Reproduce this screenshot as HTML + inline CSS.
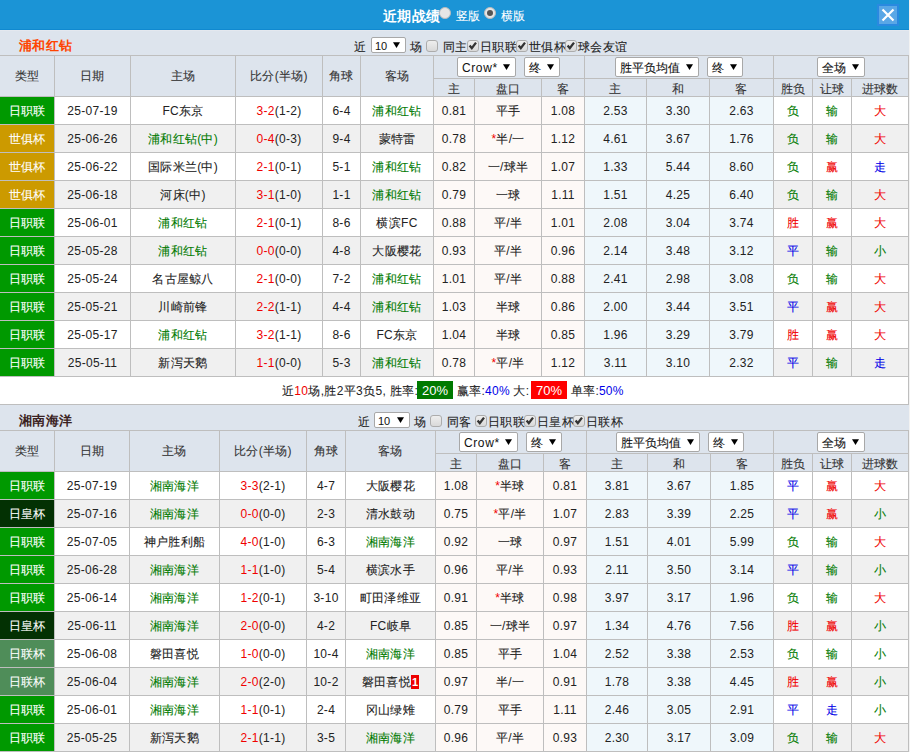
<!DOCTYPE html><html><head><meta charset="utf-8"><style>
*{margin:0;padding:0;box-sizing:border-box}
html,body{width:910px;height:752px;overflow:hidden;background:#fff}
body{position:relative;font-family:"Liberation Sans",sans-serif;font-size:12px;color:#222}
.c{font-style:normal;-webkit-text-stroke-width:0.1px}
.t[style*=bold] .c{-webkit-text-stroke-width:0}
body>div,body>svg{position:absolute}
.t{text-align:center;white-space:nowrap;overflow:visible;letter-spacing:0.3px}
.g{color:#007a00}.r{color:#f00000}.b{color:#0000e8}
.sel{position:absolute;background:#fff;border:1px solid #a8a8a8;border-radius:2px;white-space:nowrap;font-size:12px;color:#111;padding-left:5px}
.cb{position:absolute;width:12px;height:12px;border:1px solid #acacac;border-radius:3px;background:linear-gradient(#eeeeee,#d9d9d9)}
.cb svg{position:absolute;left:-1px;top:-1px}
.rad{position:absolute;width:12px;height:12px;border-radius:50%;background:#e6e6e6;border:1px solid #bbb}
.rad.on::after{content:"";position:absolute;left:2px;top:2px;width:6px;height:6px;border-radius:50%;background:#555}
.box{position:absolute;color:#fff;text-align:center;line-height:19px;font-size:13px}
.bg{background:#007a00}.br{background:#ff0000}
.rc{background:#ee0000;color:#fff;font-weight:bold;font-size:11px;padding:0 1px;line-height:14px;display:inline-block}
</style></head><body>
<div style="left:0px;top:0px;width:909px;height:30px;background:#1b94d6"></div>
<div style="left:0px;top:29px;width:909px;height:1px;background:#1089d0"></div>
<div style="left:0px;top:30px;width:909px;height:1px;background:#e4e8ef"></div>
<div class="t" style="left:383px;top:1px;width:60px;height:30px;line-height:30px;color:#fff;font-weight:bold;font-size:14px;text-align:left"><i class="c">近期战绩</i></div>
<div class="rad" style="left:439px;top:7px"></div>
<div class="t" style="left:456px;top:1px;width:30px;height:30px;line-height:30px;color:#fff;text-align:left"><i class="c">竖版</i></div>
<div class="rad on" style="left:484px;top:7px"></div>
<div class="t" style="left:501px;top:1px;width:30px;height:30px;line-height:30px;color:#fff;text-align:left"><i class="c">横版</i></div>
<div style="left:877px;top:4px;width:22px;height:22px;background:#2a89e0"></div>
<div style="left:879px;top:6px;width:18px;height:18px;background:#5aa7e6"></div>
<svg style="position:absolute;left:879px;top:6px" width="18" height="18" viewBox="0 0 18 18"><path d="M3.5 3.5 L14.5 14.5 M14.5 3.5 L3.5 14.5" stroke="#fff" stroke-width="2.2" fill="none"/></svg>
<div style="left:0px;top:30px;width:909px;height:25px;background:#dde4ed"></div>
<div class="t" style="left:19px;top:34px;width:200px;height:24px;line-height:24px;text-align:left;font-weight:bold;font-size:13px;-webkit-text-stroke-width:0;color:#ff4400"><i class="c">浦和红钻</i></div>
<div style="left:0px;top:55px;width:909px;height:41px;background:#dde4ed"></div>
<div style="left:0px;top:96px;width:909px;height:28px;background:#fff"></div>
<div style="left:434px;top:97px;width:150px;height:27px;background:#fdf9f7"></div>
<div style="left:585px;top:97px;width:188px;height:27px;background:#eff7fb"></div>
<div style="left:0px;top:97px;width:54px;height:27px;background:#009900"></div>
<div style="left:0px;top:124px;width:909px;height:28px;background:#f0f0f0"></div>
<div style="left:434px;top:125px;width:150px;height:27px;background:#fdf9f7"></div>
<div style="left:585px;top:125px;width:188px;height:27px;background:#eff7fb"></div>
<div style="left:0px;top:125px;width:54px;height:27px;background:#cc9a00"></div>
<div style="left:0px;top:152px;width:909px;height:28px;background:#fff"></div>
<div style="left:434px;top:153px;width:150px;height:27px;background:#fdf9f7"></div>
<div style="left:585px;top:153px;width:188px;height:27px;background:#eff7fb"></div>
<div style="left:0px;top:153px;width:54px;height:27px;background:#cc9a00"></div>
<div style="left:0px;top:180px;width:909px;height:28px;background:#f0f0f0"></div>
<div style="left:434px;top:181px;width:150px;height:27px;background:#fdf9f7"></div>
<div style="left:585px;top:181px;width:188px;height:27px;background:#eff7fb"></div>
<div style="left:0px;top:181px;width:54px;height:27px;background:#cc9a00"></div>
<div style="left:0px;top:208px;width:909px;height:28px;background:#fff"></div>
<div style="left:434px;top:209px;width:150px;height:27px;background:#fdf9f7"></div>
<div style="left:585px;top:209px;width:188px;height:27px;background:#eff7fb"></div>
<div style="left:0px;top:209px;width:54px;height:27px;background:#009900"></div>
<div style="left:0px;top:236px;width:909px;height:28px;background:#f0f0f0"></div>
<div style="left:434px;top:237px;width:150px;height:27px;background:#fdf9f7"></div>
<div style="left:585px;top:237px;width:188px;height:27px;background:#eff7fb"></div>
<div style="left:0px;top:237px;width:54px;height:27px;background:#009900"></div>
<div style="left:0px;top:264px;width:909px;height:28px;background:#fff"></div>
<div style="left:434px;top:265px;width:150px;height:27px;background:#fdf9f7"></div>
<div style="left:585px;top:265px;width:188px;height:27px;background:#eff7fb"></div>
<div style="left:0px;top:265px;width:54px;height:27px;background:#009900"></div>
<div style="left:0px;top:292px;width:909px;height:28px;background:#f0f0f0"></div>
<div style="left:434px;top:293px;width:150px;height:27px;background:#fdf9f7"></div>
<div style="left:585px;top:293px;width:188px;height:27px;background:#eff7fb"></div>
<div style="left:0px;top:293px;width:54px;height:27px;background:#009900"></div>
<div style="left:0px;top:320px;width:909px;height:28px;background:#fff"></div>
<div style="left:434px;top:321px;width:150px;height:27px;background:#fdf9f7"></div>
<div style="left:585px;top:321px;width:188px;height:27px;background:#eff7fb"></div>
<div style="left:0px;top:321px;width:54px;height:27px;background:#009900"></div>
<div style="left:0px;top:348px;width:909px;height:28px;background:#f0f0f0"></div>
<div style="left:434px;top:349px;width:150px;height:27px;background:#fdf9f7"></div>
<div style="left:585px;top:349px;width:188px;height:27px;background:#eff7fb"></div>
<div style="left:0px;top:349px;width:54px;height:27px;background:#009900"></div>
<div style="left:0px;top:55px;width:909px;height:1px;background:#bebebe"></div>
<div style="left:433px;top:78px;width:476px;height:1px;background:#bebebe"></div>
<div style="left:0px;top:96px;width:909px;height:1px;background:#bebebe"></div>
<div style="left:0px;top:124px;width:909px;height:1px;background:#bebebe"></div>
<div style="left:0px;top:152px;width:909px;height:1px;background:#bebebe"></div>
<div style="left:0px;top:180px;width:909px;height:1px;background:#bebebe"></div>
<div style="left:0px;top:208px;width:909px;height:1px;background:#bebebe"></div>
<div style="left:0px;top:236px;width:909px;height:1px;background:#bebebe"></div>
<div style="left:0px;top:264px;width:909px;height:1px;background:#bebebe"></div>
<div style="left:0px;top:292px;width:909px;height:1px;background:#bebebe"></div>
<div style="left:0px;top:320px;width:909px;height:1px;background:#bebebe"></div>
<div style="left:0px;top:348px;width:909px;height:1px;background:#bebebe"></div>
<div style="left:0px;top:376px;width:909px;height:1px;background:#bebebe"></div>
<div style="left:54px;top:55px;width:1px;height:322px;background:#bebebe"></div>
<div style="left:130px;top:55px;width:1px;height:322px;background:#bebebe"></div>
<div style="left:235px;top:55px;width:1px;height:322px;background:#bebebe"></div>
<div style="left:322px;top:55px;width:1px;height:322px;background:#bebebe"></div>
<div style="left:360px;top:55px;width:1px;height:322px;background:#bebebe"></div>
<div style="left:433px;top:55px;width:1px;height:322px;background:#bebebe"></div>
<div style="left:474px;top:78px;width:1px;height:299px;background:#bebebe"></div>
<div style="left:541px;top:78px;width:1px;height:299px;background:#bebebe"></div>
<div style="left:584px;top:55px;width:1px;height:322px;background:#bebebe"></div>
<div style="left:646px;top:78px;width:1px;height:299px;background:#bebebe"></div>
<div style="left:709px;top:78px;width:1px;height:299px;background:#bebebe"></div>
<div style="left:773px;top:55px;width:1px;height:322px;background:#bebebe"></div>
<div style="left:812px;top:78px;width:1px;height:299px;background:#bebebe"></div>
<div style="left:851px;top:78px;width:1px;height:299px;background:#bebebe"></div>
<div style="left:908px;top:55px;width:1px;height:322px;background:#bebebe"></div>
<div class="t" style="left:0px;top:56px;width:54px;height:40px;line-height:40px;color:#333"><i class="c">类型</i></div>
<div class="t" style="left:55px;top:56px;width:75px;height:40px;line-height:40px;color:#333"><i class="c">日期</i></div>
<div class="t" style="left:131px;top:56px;width:104px;height:40px;line-height:40px;color:#333"><i class="c">主场</i></div>
<div class="t" style="left:236px;top:56px;width:86px;height:40px;line-height:40px;color:#333"><i class="c">比分</i>(<i class="c">半场</i>)</div>
<div class="t" style="left:323px;top:56px;width:37px;height:40px;line-height:40px;color:#333"><i class="c">角球</i></div>
<div class="t" style="left:361px;top:56px;width:72px;height:40px;line-height:40px;color:#333"><i class="c">客场</i></div>
<div class="t" style="left:434px;top:81px;width:40px;height:17px;line-height:17px;color:#333"><i class="c">主</i></div>
<div class="t" style="left:475px;top:81px;width:66px;height:17px;line-height:17px;color:#333"><i class="c">盘口</i></div>
<div class="t" style="left:542px;top:81px;width:42px;height:17px;line-height:17px;color:#333"><i class="c">客</i></div>
<div class="t" style="left:585px;top:81px;width:61px;height:17px;line-height:17px;color:#333"><i class="c">主</i></div>
<div class="t" style="left:647px;top:81px;width:62px;height:17px;line-height:17px;color:#333"><i class="c">和</i></div>
<div class="t" style="left:710px;top:81px;width:63px;height:17px;line-height:17px;color:#333"><i class="c">客</i></div>
<div class="t" style="left:774px;top:81px;width:38px;height:17px;line-height:17px;color:#333"><i class="c">胜负</i></div>
<div class="t" style="left:813px;top:81px;width:38px;height:17px;line-height:17px;color:#333"><i class="c">让球</i></div>
<div class="t" style="left:852px;top:81px;width:56px;height:17px;line-height:17px;color:#333"><i class="c">进球数</i></div>
<div class="t" style="left:0px;top:98px;width:54px;height:27px;line-height:27px;color:#fff"><i class="c">日职联</i></div>
<div class="t" style="left:55px;top:98px;width:75px;height:27px;line-height:27px;">25-07-19</div>
<div class="t" style="left:131px;top:98px;width:104px;height:27px;line-height:27px;">FC<i class="c">东京</i></div>
<div class="t" style="left:236px;top:98px;width:86px;height:27px;line-height:27px;"><span class="r">3-2</span>(1-2)</div>
<div class="t" style="left:323px;top:98px;width:37px;height:27px;line-height:27px;">6-4</div>
<div class="t" style="left:361px;top:98px;width:72px;height:27px;line-height:27px;"><span class="g"><i class="c">浦和红钻</i></span></div>
<div class="t" style="left:434px;top:98px;width:40px;height:27px;line-height:27px;">0.81</div>
<div class="t" style="left:475px;top:98px;width:66px;height:27px;line-height:27px;"><i class="c">平手</i></div>
<div class="t" style="left:542px;top:98px;width:42px;height:27px;line-height:27px;">1.08</div>
<div class="t" style="left:585px;top:98px;width:61px;height:27px;line-height:27px;">2.53</div>
<div class="t" style="left:647px;top:98px;width:62px;height:27px;line-height:27px;">3.30</div>
<div class="t" style="left:710px;top:98px;width:63px;height:27px;line-height:27px;">2.63</div>
<div class="t" style="left:774px;top:98px;width:38px;height:27px;line-height:27px;"><span class="g"><i class="c">负</i></span></div>
<div class="t" style="left:813px;top:98px;width:38px;height:27px;line-height:27px;"><span class="g"><i class="c">输</i></span></div>
<div class="t" style="left:852px;top:98px;width:56px;height:27px;line-height:27px;"><span class="r"><i class="c">大</i></span></div>
<div class="t" style="left:0px;top:126px;width:54px;height:27px;line-height:27px;color:#fff"><i class="c">世俱杯</i></div>
<div class="t" style="left:55px;top:126px;width:75px;height:27px;line-height:27px;">25-06-26</div>
<div class="t" style="left:131px;top:126px;width:104px;height:27px;line-height:27px;"><span class="g"><i class="c">浦和红钻</i>(<i class="c">中</i>)</span></div>
<div class="t" style="left:236px;top:126px;width:86px;height:27px;line-height:27px;"><span class="r">0-4</span>(0-3)</div>
<div class="t" style="left:323px;top:126px;width:37px;height:27px;line-height:27px;">9-4</div>
<div class="t" style="left:361px;top:126px;width:72px;height:27px;line-height:27px;"><i class="c">蒙特雷</i></div>
<div class="t" style="left:434px;top:126px;width:40px;height:27px;line-height:27px;">0.78</div>
<div class="t" style="left:475px;top:126px;width:66px;height:27px;line-height:27px;"><span class="r">*</span><i class="c">半</i>/<i class="c">一</i></div>
<div class="t" style="left:542px;top:126px;width:42px;height:27px;line-height:27px;">1.12</div>
<div class="t" style="left:585px;top:126px;width:61px;height:27px;line-height:27px;">4.61</div>
<div class="t" style="left:647px;top:126px;width:62px;height:27px;line-height:27px;">3.67</div>
<div class="t" style="left:710px;top:126px;width:63px;height:27px;line-height:27px;">1.76</div>
<div class="t" style="left:774px;top:126px;width:38px;height:27px;line-height:27px;"><span class="g"><i class="c">负</i></span></div>
<div class="t" style="left:813px;top:126px;width:38px;height:27px;line-height:27px;"><span class="g"><i class="c">输</i></span></div>
<div class="t" style="left:852px;top:126px;width:56px;height:27px;line-height:27px;"><span class="r"><i class="c">大</i></span></div>
<div class="t" style="left:0px;top:154px;width:54px;height:27px;line-height:27px;color:#fff"><i class="c">世俱杯</i></div>
<div class="t" style="left:55px;top:154px;width:75px;height:27px;line-height:27px;">25-06-22</div>
<div class="t" style="left:131px;top:154px;width:104px;height:27px;line-height:27px;"><i class="c">国际米兰</i>(<i class="c">中</i>)</div>
<div class="t" style="left:236px;top:154px;width:86px;height:27px;line-height:27px;"><span class="r">2-1</span>(0-1)</div>
<div class="t" style="left:323px;top:154px;width:37px;height:27px;line-height:27px;">5-1</div>
<div class="t" style="left:361px;top:154px;width:72px;height:27px;line-height:27px;"><span class="g"><i class="c">浦和红钻</i></span></div>
<div class="t" style="left:434px;top:154px;width:40px;height:27px;line-height:27px;">0.82</div>
<div class="t" style="left:475px;top:154px;width:66px;height:27px;line-height:27px;"><i class="c">一</i>/<i class="c">球半</i></div>
<div class="t" style="left:542px;top:154px;width:42px;height:27px;line-height:27px;">1.07</div>
<div class="t" style="left:585px;top:154px;width:61px;height:27px;line-height:27px;">1.33</div>
<div class="t" style="left:647px;top:154px;width:62px;height:27px;line-height:27px;">5.44</div>
<div class="t" style="left:710px;top:154px;width:63px;height:27px;line-height:27px;">8.60</div>
<div class="t" style="left:774px;top:154px;width:38px;height:27px;line-height:27px;"><span class="g"><i class="c">负</i></span></div>
<div class="t" style="left:813px;top:154px;width:38px;height:27px;line-height:27px;"><span class="r"><i class="c">赢</i></span></div>
<div class="t" style="left:852px;top:154px;width:56px;height:27px;line-height:27px;"><span class="b"><i class="c">走</i></span></div>
<div class="t" style="left:0px;top:182px;width:54px;height:27px;line-height:27px;color:#fff"><i class="c">世俱杯</i></div>
<div class="t" style="left:55px;top:182px;width:75px;height:27px;line-height:27px;">25-06-18</div>
<div class="t" style="left:131px;top:182px;width:104px;height:27px;line-height:27px;"><i class="c">河床</i>(<i class="c">中</i>)</div>
<div class="t" style="left:236px;top:182px;width:86px;height:27px;line-height:27px;"><span class="r">3-1</span>(1-0)</div>
<div class="t" style="left:323px;top:182px;width:37px;height:27px;line-height:27px;">1-1</div>
<div class="t" style="left:361px;top:182px;width:72px;height:27px;line-height:27px;"><span class="g"><i class="c">浦和红钻</i></span></div>
<div class="t" style="left:434px;top:182px;width:40px;height:27px;line-height:27px;">0.79</div>
<div class="t" style="left:475px;top:182px;width:66px;height:27px;line-height:27px;"><i class="c">一球</i></div>
<div class="t" style="left:542px;top:182px;width:42px;height:27px;line-height:27px;">1.11</div>
<div class="t" style="left:585px;top:182px;width:61px;height:27px;line-height:27px;">1.51</div>
<div class="t" style="left:647px;top:182px;width:62px;height:27px;line-height:27px;">4.25</div>
<div class="t" style="left:710px;top:182px;width:63px;height:27px;line-height:27px;">6.40</div>
<div class="t" style="left:774px;top:182px;width:38px;height:27px;line-height:27px;"><span class="g"><i class="c">负</i></span></div>
<div class="t" style="left:813px;top:182px;width:38px;height:27px;line-height:27px;"><span class="g"><i class="c">输</i></span></div>
<div class="t" style="left:852px;top:182px;width:56px;height:27px;line-height:27px;"><span class="r"><i class="c">大</i></span></div>
<div class="t" style="left:0px;top:210px;width:54px;height:27px;line-height:27px;color:#fff"><i class="c">日职联</i></div>
<div class="t" style="left:55px;top:210px;width:75px;height:27px;line-height:27px;">25-06-01</div>
<div class="t" style="left:131px;top:210px;width:104px;height:27px;line-height:27px;"><span class="g"><i class="c">浦和红钻</i></span></div>
<div class="t" style="left:236px;top:210px;width:86px;height:27px;line-height:27px;"><span class="r">2-1</span>(0-1)</div>
<div class="t" style="left:323px;top:210px;width:37px;height:27px;line-height:27px;">8-6</div>
<div class="t" style="left:361px;top:210px;width:72px;height:27px;line-height:27px;"><i class="c">横滨</i>FC</div>
<div class="t" style="left:434px;top:210px;width:40px;height:27px;line-height:27px;">0.88</div>
<div class="t" style="left:475px;top:210px;width:66px;height:27px;line-height:27px;"><i class="c">平</i>/<i class="c">半</i></div>
<div class="t" style="left:542px;top:210px;width:42px;height:27px;line-height:27px;">1.01</div>
<div class="t" style="left:585px;top:210px;width:61px;height:27px;line-height:27px;">2.08</div>
<div class="t" style="left:647px;top:210px;width:62px;height:27px;line-height:27px;">3.04</div>
<div class="t" style="left:710px;top:210px;width:63px;height:27px;line-height:27px;">3.74</div>
<div class="t" style="left:774px;top:210px;width:38px;height:27px;line-height:27px;"><span class="r"><i class="c">胜</i></span></div>
<div class="t" style="left:813px;top:210px;width:38px;height:27px;line-height:27px;"><span class="r"><i class="c">赢</i></span></div>
<div class="t" style="left:852px;top:210px;width:56px;height:27px;line-height:27px;"><span class="r"><i class="c">大</i></span></div>
<div class="t" style="left:0px;top:238px;width:54px;height:27px;line-height:27px;color:#fff"><i class="c">日职联</i></div>
<div class="t" style="left:55px;top:238px;width:75px;height:27px;line-height:27px;">25-05-28</div>
<div class="t" style="left:131px;top:238px;width:104px;height:27px;line-height:27px;"><span class="g"><i class="c">浦和红钻</i></span></div>
<div class="t" style="left:236px;top:238px;width:86px;height:27px;line-height:27px;"><span class="r">0-0</span>(0-0)</div>
<div class="t" style="left:323px;top:238px;width:37px;height:27px;line-height:27px;">4-8</div>
<div class="t" style="left:361px;top:238px;width:72px;height:27px;line-height:27px;"><i class="c">大阪樱花</i></div>
<div class="t" style="left:434px;top:238px;width:40px;height:27px;line-height:27px;">0.93</div>
<div class="t" style="left:475px;top:238px;width:66px;height:27px;line-height:27px;"><i class="c">平</i>/<i class="c">半</i></div>
<div class="t" style="left:542px;top:238px;width:42px;height:27px;line-height:27px;">0.96</div>
<div class="t" style="left:585px;top:238px;width:61px;height:27px;line-height:27px;">2.14</div>
<div class="t" style="left:647px;top:238px;width:62px;height:27px;line-height:27px;">3.48</div>
<div class="t" style="left:710px;top:238px;width:63px;height:27px;line-height:27px;">3.12</div>
<div class="t" style="left:774px;top:238px;width:38px;height:27px;line-height:27px;"><span class="b"><i class="c">平</i></span></div>
<div class="t" style="left:813px;top:238px;width:38px;height:27px;line-height:27px;"><span class="g"><i class="c">输</i></span></div>
<div class="t" style="left:852px;top:238px;width:56px;height:27px;line-height:27px;"><span class="g"><i class="c">小</i></span></div>
<div class="t" style="left:0px;top:266px;width:54px;height:27px;line-height:27px;color:#fff"><i class="c">日职联</i></div>
<div class="t" style="left:55px;top:266px;width:75px;height:27px;line-height:27px;">25-05-24</div>
<div class="t" style="left:131px;top:266px;width:104px;height:27px;line-height:27px;"><i class="c">名古屋鲸八</i></div>
<div class="t" style="left:236px;top:266px;width:86px;height:27px;line-height:27px;"><span class="r">2-1</span>(0-0)</div>
<div class="t" style="left:323px;top:266px;width:37px;height:27px;line-height:27px;">7-2</div>
<div class="t" style="left:361px;top:266px;width:72px;height:27px;line-height:27px;"><span class="g"><i class="c">浦和红钻</i></span></div>
<div class="t" style="left:434px;top:266px;width:40px;height:27px;line-height:27px;">1.01</div>
<div class="t" style="left:475px;top:266px;width:66px;height:27px;line-height:27px;"><i class="c">平</i>/<i class="c">半</i></div>
<div class="t" style="left:542px;top:266px;width:42px;height:27px;line-height:27px;">0.88</div>
<div class="t" style="left:585px;top:266px;width:61px;height:27px;line-height:27px;">2.41</div>
<div class="t" style="left:647px;top:266px;width:62px;height:27px;line-height:27px;">2.98</div>
<div class="t" style="left:710px;top:266px;width:63px;height:27px;line-height:27px;">3.08</div>
<div class="t" style="left:774px;top:266px;width:38px;height:27px;line-height:27px;"><span class="g"><i class="c">负</i></span></div>
<div class="t" style="left:813px;top:266px;width:38px;height:27px;line-height:27px;"><span class="g"><i class="c">输</i></span></div>
<div class="t" style="left:852px;top:266px;width:56px;height:27px;line-height:27px;"><span class="r"><i class="c">大</i></span></div>
<div class="t" style="left:0px;top:294px;width:54px;height:27px;line-height:27px;color:#fff"><i class="c">日职联</i></div>
<div class="t" style="left:55px;top:294px;width:75px;height:27px;line-height:27px;">25-05-21</div>
<div class="t" style="left:131px;top:294px;width:104px;height:27px;line-height:27px;"><i class="c">川崎前锋</i></div>
<div class="t" style="left:236px;top:294px;width:86px;height:27px;line-height:27px;"><span class="r">2-2</span>(1-1)</div>
<div class="t" style="left:323px;top:294px;width:37px;height:27px;line-height:27px;">4-4</div>
<div class="t" style="left:361px;top:294px;width:72px;height:27px;line-height:27px;"><span class="g"><i class="c">浦和红钻</i></span></div>
<div class="t" style="left:434px;top:294px;width:40px;height:27px;line-height:27px;">1.03</div>
<div class="t" style="left:475px;top:294px;width:66px;height:27px;line-height:27px;"><i class="c">半球</i></div>
<div class="t" style="left:542px;top:294px;width:42px;height:27px;line-height:27px;">0.86</div>
<div class="t" style="left:585px;top:294px;width:61px;height:27px;line-height:27px;">2.00</div>
<div class="t" style="left:647px;top:294px;width:62px;height:27px;line-height:27px;">3.44</div>
<div class="t" style="left:710px;top:294px;width:63px;height:27px;line-height:27px;">3.51</div>
<div class="t" style="left:774px;top:294px;width:38px;height:27px;line-height:27px;"><span class="b"><i class="c">平</i></span></div>
<div class="t" style="left:813px;top:294px;width:38px;height:27px;line-height:27px;"><span class="r"><i class="c">赢</i></span></div>
<div class="t" style="left:852px;top:294px;width:56px;height:27px;line-height:27px;"><span class="r"><i class="c">大</i></span></div>
<div class="t" style="left:0px;top:322px;width:54px;height:27px;line-height:27px;color:#fff"><i class="c">日职联</i></div>
<div class="t" style="left:55px;top:322px;width:75px;height:27px;line-height:27px;">25-05-17</div>
<div class="t" style="left:131px;top:322px;width:104px;height:27px;line-height:27px;"><span class="g"><i class="c">浦和红钻</i></span></div>
<div class="t" style="left:236px;top:322px;width:86px;height:27px;line-height:27px;"><span class="r">3-2</span>(1-1)</div>
<div class="t" style="left:323px;top:322px;width:37px;height:27px;line-height:27px;">8-6</div>
<div class="t" style="left:361px;top:322px;width:72px;height:27px;line-height:27px;">FC<i class="c">东京</i></div>
<div class="t" style="left:434px;top:322px;width:40px;height:27px;line-height:27px;">1.04</div>
<div class="t" style="left:475px;top:322px;width:66px;height:27px;line-height:27px;"><i class="c">半球</i></div>
<div class="t" style="left:542px;top:322px;width:42px;height:27px;line-height:27px;">0.85</div>
<div class="t" style="left:585px;top:322px;width:61px;height:27px;line-height:27px;">1.96</div>
<div class="t" style="left:647px;top:322px;width:62px;height:27px;line-height:27px;">3.29</div>
<div class="t" style="left:710px;top:322px;width:63px;height:27px;line-height:27px;">3.79</div>
<div class="t" style="left:774px;top:322px;width:38px;height:27px;line-height:27px;"><span class="r"><i class="c">胜</i></span></div>
<div class="t" style="left:813px;top:322px;width:38px;height:27px;line-height:27px;"><span class="r"><i class="c">赢</i></span></div>
<div class="t" style="left:852px;top:322px;width:56px;height:27px;line-height:27px;"><span class="r"><i class="c">大</i></span></div>
<div class="t" style="left:0px;top:350px;width:54px;height:27px;line-height:27px;color:#fff"><i class="c">日职联</i></div>
<div class="t" style="left:55px;top:350px;width:75px;height:27px;line-height:27px;">25-05-11</div>
<div class="t" style="left:131px;top:350px;width:104px;height:27px;line-height:27px;"><i class="c">新泻天鹅</i></div>
<div class="t" style="left:236px;top:350px;width:86px;height:27px;line-height:27px;"><span class="r">1-1</span>(0-0)</div>
<div class="t" style="left:323px;top:350px;width:37px;height:27px;line-height:27px;">5-3</div>
<div class="t" style="left:361px;top:350px;width:72px;height:27px;line-height:27px;"><span class="g"><i class="c">浦和红钻</i></span></div>
<div class="t" style="left:434px;top:350px;width:40px;height:27px;line-height:27px;">0.78</div>
<div class="t" style="left:475px;top:350px;width:66px;height:27px;line-height:27px;"><span class="r">*</span><i class="c">平</i>/<i class="c">半</i></div>
<div class="t" style="left:542px;top:350px;width:42px;height:27px;line-height:27px;">1.12</div>
<div class="t" style="left:585px;top:350px;width:61px;height:27px;line-height:27px;">3.11</div>
<div class="t" style="left:647px;top:350px;width:62px;height:27px;line-height:27px;">3.10</div>
<div class="t" style="left:710px;top:350px;width:63px;height:27px;line-height:27px;">2.32</div>
<div class="t" style="left:774px;top:350px;width:38px;height:27px;line-height:27px;"><span class="b"><i class="c">平</i></span></div>
<div class="t" style="left:813px;top:350px;width:38px;height:27px;line-height:27px;"><span class="g"><i class="c">输</i></span></div>
<div class="t" style="left:852px;top:350px;width:56px;height:27px;line-height:27px;"><span class="b"><i class="c">走</i></span></div>
<div style="left:0px;top:377px;width:909px;height:27px;background:#fff"></div>
<div class="t" style="left:282px;top:378px;height:27px;line-height:27px;text-align:left;letter-spacing:0.33px"><i class="c">近</i><span class="r">10</span><i class="c">场</i>,<i class="c">胜</i>2<i class="c">平</i>3<i class="c">负</i>5, <i class="c">胜率</i>:</div>
<div class="box bg" style="left:417px;top:381px;width:36px;height:18px;">20%</div>
<div class="t" style="left:457px;top:378px;height:27px;line-height:27px;text-align:left;letter-spacing:0.25px"><i class="c">赢率</i>:<span class="b">40%</span> <i class="c">大</i>:</div>
<div class="box br" style="left:531px;top:381px;width:36px;height:18px;">70%</div>
<div class="t" style="left:571px;top:378px;height:27px;line-height:27px;text-align:left;letter-spacing:0.2px"><i class="c">单率</i>:<span class="b">50%</span></div>
<div style="left:0px;top:404px;width:909px;height:1px;background:#bebebe"></div>
<div style="left:908px;top:376px;width:1px;height:29px;background:#bebebe"></div>
<div style="left:0px;top:405px;width:909px;height:25px;background:#dde4ed"></div>
<div class="t" style="left:19px;top:409px;width:200px;height:24px;line-height:24px;text-align:left;font-weight:bold;font-size:13px;-webkit-text-stroke-width:0;color:#3a2222"><i class="c">湘南海洋</i></div>
<div style="left:0px;top:430px;width:909px;height:41px;background:#dde4ed"></div>
<div style="left:0px;top:471px;width:909px;height:28px;background:#fff"></div>
<div style="left:436px;top:472px;width:150px;height:27px;background:#fdf9f7"></div>
<div style="left:587px;top:472px;width:186px;height:27px;background:#eff7fb"></div>
<div style="left:0px;top:472px;width:54px;height:27px;background:#009900"></div>
<div style="left:0px;top:499px;width:909px;height:28px;background:#f0f0f0"></div>
<div style="left:436px;top:500px;width:150px;height:27px;background:#fdf9f7"></div>
<div style="left:587px;top:500px;width:186px;height:27px;background:#eff7fb"></div>
<div style="left:0px;top:500px;width:54px;height:27px;background:#033103"></div>
<div style="left:0px;top:527px;width:909px;height:28px;background:#fff"></div>
<div style="left:436px;top:528px;width:150px;height:27px;background:#fdf9f7"></div>
<div style="left:587px;top:528px;width:186px;height:27px;background:#eff7fb"></div>
<div style="left:0px;top:528px;width:54px;height:27px;background:#009900"></div>
<div style="left:0px;top:555px;width:909px;height:28px;background:#f0f0f0"></div>
<div style="left:436px;top:556px;width:150px;height:27px;background:#fdf9f7"></div>
<div style="left:587px;top:556px;width:186px;height:27px;background:#eff7fb"></div>
<div style="left:0px;top:556px;width:54px;height:27px;background:#009900"></div>
<div style="left:0px;top:583px;width:909px;height:28px;background:#fff"></div>
<div style="left:436px;top:584px;width:150px;height:27px;background:#fdf9f7"></div>
<div style="left:587px;top:584px;width:186px;height:27px;background:#eff7fb"></div>
<div style="left:0px;top:584px;width:54px;height:27px;background:#009900"></div>
<div style="left:0px;top:611px;width:909px;height:28px;background:#f0f0f0"></div>
<div style="left:436px;top:612px;width:150px;height:27px;background:#fdf9f7"></div>
<div style="left:587px;top:612px;width:186px;height:27px;background:#eff7fb"></div>
<div style="left:0px;top:612px;width:54px;height:27px;background:#033103"></div>
<div style="left:0px;top:639px;width:909px;height:28px;background:#fff"></div>
<div style="left:436px;top:640px;width:150px;height:27px;background:#fdf9f7"></div>
<div style="left:587px;top:640px;width:186px;height:27px;background:#eff7fb"></div>
<div style="left:0px;top:640px;width:54px;height:27px;background:#4f8d59"></div>
<div style="left:0px;top:667px;width:909px;height:28px;background:#f0f0f0"></div>
<div style="left:436px;top:668px;width:150px;height:27px;background:#fdf9f7"></div>
<div style="left:587px;top:668px;width:186px;height:27px;background:#eff7fb"></div>
<div style="left:0px;top:668px;width:54px;height:27px;background:#4f8d59"></div>
<div style="left:0px;top:695px;width:909px;height:28px;background:#fff"></div>
<div style="left:436px;top:696px;width:150px;height:27px;background:#fdf9f7"></div>
<div style="left:587px;top:696px;width:186px;height:27px;background:#eff7fb"></div>
<div style="left:0px;top:696px;width:54px;height:27px;background:#009900"></div>
<div style="left:0px;top:723px;width:909px;height:28px;background:#f0f0f0"></div>
<div style="left:436px;top:724px;width:150px;height:27px;background:#fdf9f7"></div>
<div style="left:587px;top:724px;width:186px;height:27px;background:#eff7fb"></div>
<div style="left:0px;top:724px;width:54px;height:27px;background:#009900"></div>
<div style="left:0px;top:430px;width:909px;height:1px;background:#bebebe"></div>
<div style="left:435px;top:453px;width:474px;height:1px;background:#bebebe"></div>
<div style="left:0px;top:471px;width:909px;height:1px;background:#bebebe"></div>
<div style="left:0px;top:499px;width:909px;height:1px;background:#bebebe"></div>
<div style="left:0px;top:527px;width:909px;height:1px;background:#bebebe"></div>
<div style="left:0px;top:555px;width:909px;height:1px;background:#bebebe"></div>
<div style="left:0px;top:583px;width:909px;height:1px;background:#bebebe"></div>
<div style="left:0px;top:611px;width:909px;height:1px;background:#bebebe"></div>
<div style="left:0px;top:639px;width:909px;height:1px;background:#bebebe"></div>
<div style="left:0px;top:667px;width:909px;height:1px;background:#bebebe"></div>
<div style="left:0px;top:695px;width:909px;height:1px;background:#bebebe"></div>
<div style="left:0px;top:723px;width:909px;height:1px;background:#bebebe"></div>
<div style="left:0px;top:751px;width:909px;height:1px;background:#bebebe"></div>
<div style="left:54px;top:430px;width:1px;height:322px;background:#bebebe"></div>
<div style="left:129px;top:430px;width:1px;height:322px;background:#bebebe"></div>
<div style="left:219px;top:430px;width:1px;height:322px;background:#bebebe"></div>
<div style="left:306px;top:430px;width:1px;height:322px;background:#bebebe"></div>
<div style="left:345px;top:430px;width:1px;height:322px;background:#bebebe"></div>
<div style="left:435px;top:430px;width:1px;height:322px;background:#bebebe"></div>
<div style="left:476px;top:453px;width:1px;height:299px;background:#bebebe"></div>
<div style="left:543px;top:453px;width:1px;height:299px;background:#bebebe"></div>
<div style="left:586px;top:430px;width:1px;height:322px;background:#bebebe"></div>
<div style="left:647px;top:453px;width:1px;height:299px;background:#bebebe"></div>
<div style="left:710px;top:453px;width:1px;height:299px;background:#bebebe"></div>
<div style="left:773px;top:430px;width:1px;height:322px;background:#bebebe"></div>
<div style="left:812px;top:453px;width:1px;height:299px;background:#bebebe"></div>
<div style="left:851px;top:453px;width:1px;height:299px;background:#bebebe"></div>
<div style="left:908px;top:430px;width:1px;height:322px;background:#bebebe"></div>
<div class="t" style="left:0px;top:431px;width:54px;height:40px;line-height:40px;color:#333"><i class="c">类型</i></div>
<div class="t" style="left:55px;top:431px;width:74px;height:40px;line-height:40px;color:#333"><i class="c">日期</i></div>
<div class="t" style="left:130px;top:431px;width:89px;height:40px;line-height:40px;color:#333"><i class="c">主场</i></div>
<div class="t" style="left:220px;top:431px;width:86px;height:40px;line-height:40px;color:#333"><i class="c">比分</i>(<i class="c">半场</i>)</div>
<div class="t" style="left:307px;top:431px;width:38px;height:40px;line-height:40px;color:#333"><i class="c">角球</i></div>
<div class="t" style="left:346px;top:431px;width:89px;height:40px;line-height:40px;color:#333"><i class="c">客场</i></div>
<div class="t" style="left:436px;top:456px;width:40px;height:17px;line-height:17px;color:#333"><i class="c">主</i></div>
<div class="t" style="left:477px;top:456px;width:66px;height:17px;line-height:17px;color:#333"><i class="c">盘口</i></div>
<div class="t" style="left:544px;top:456px;width:42px;height:17px;line-height:17px;color:#333"><i class="c">客</i></div>
<div class="t" style="left:587px;top:456px;width:60px;height:17px;line-height:17px;color:#333"><i class="c">主</i></div>
<div class="t" style="left:648px;top:456px;width:62px;height:17px;line-height:17px;color:#333"><i class="c">和</i></div>
<div class="t" style="left:711px;top:456px;width:62px;height:17px;line-height:17px;color:#333"><i class="c">客</i></div>
<div class="t" style="left:774px;top:456px;width:38px;height:17px;line-height:17px;color:#333"><i class="c">胜负</i></div>
<div class="t" style="left:813px;top:456px;width:38px;height:17px;line-height:17px;color:#333"><i class="c">让球</i></div>
<div class="t" style="left:852px;top:456px;width:56px;height:17px;line-height:17px;color:#333"><i class="c">进球数</i></div>
<div class="t" style="left:0px;top:473px;width:54px;height:27px;line-height:27px;color:#fff"><i class="c">日职联</i></div>
<div class="t" style="left:55px;top:473px;width:74px;height:27px;line-height:27px;">25-07-19</div>
<div class="t" style="left:130px;top:473px;width:89px;height:27px;line-height:27px;"><span class="g"><i class="c">湘南海洋</i></span></div>
<div class="t" style="left:220px;top:473px;width:86px;height:27px;line-height:27px;"><span class="r">3-3</span>(2-1)</div>
<div class="t" style="left:307px;top:473px;width:38px;height:27px;line-height:27px;">4-7</div>
<div class="t" style="left:346px;top:473px;width:89px;height:27px;line-height:27px;"><i class="c">大阪樱花</i></div>
<div class="t" style="left:436px;top:473px;width:40px;height:27px;line-height:27px;">1.08</div>
<div class="t" style="left:477px;top:473px;width:66px;height:27px;line-height:27px;"><span class="r">*</span><i class="c">半球</i></div>
<div class="t" style="left:544px;top:473px;width:42px;height:27px;line-height:27px;">0.81</div>
<div class="t" style="left:587px;top:473px;width:60px;height:27px;line-height:27px;">3.81</div>
<div class="t" style="left:648px;top:473px;width:62px;height:27px;line-height:27px;">3.67</div>
<div class="t" style="left:711px;top:473px;width:62px;height:27px;line-height:27px;">1.85</div>
<div class="t" style="left:774px;top:473px;width:38px;height:27px;line-height:27px;"><span class="b"><i class="c">平</i></span></div>
<div class="t" style="left:813px;top:473px;width:38px;height:27px;line-height:27px;"><span class="r"><i class="c">赢</i></span></div>
<div class="t" style="left:852px;top:473px;width:56px;height:27px;line-height:27px;"><span class="r"><i class="c">大</i></span></div>
<div class="t" style="left:0px;top:501px;width:54px;height:27px;line-height:27px;color:#fff"><i class="c">日皇杯</i></div>
<div class="t" style="left:55px;top:501px;width:74px;height:27px;line-height:27px;">25-07-16</div>
<div class="t" style="left:130px;top:501px;width:89px;height:27px;line-height:27px;"><span class="g"><i class="c">湘南海洋</i></span></div>
<div class="t" style="left:220px;top:501px;width:86px;height:27px;line-height:27px;"><span class="r">0-0</span>(0-0)</div>
<div class="t" style="left:307px;top:501px;width:38px;height:27px;line-height:27px;">2-3</div>
<div class="t" style="left:346px;top:501px;width:89px;height:27px;line-height:27px;"><i class="c">清水鼓动</i></div>
<div class="t" style="left:436px;top:501px;width:40px;height:27px;line-height:27px;">0.75</div>
<div class="t" style="left:477px;top:501px;width:66px;height:27px;line-height:27px;"><span class="r">*</span><i class="c">平</i>/<i class="c">半</i></div>
<div class="t" style="left:544px;top:501px;width:42px;height:27px;line-height:27px;">1.07</div>
<div class="t" style="left:587px;top:501px;width:60px;height:27px;line-height:27px;">2.83</div>
<div class="t" style="left:648px;top:501px;width:62px;height:27px;line-height:27px;">3.39</div>
<div class="t" style="left:711px;top:501px;width:62px;height:27px;line-height:27px;">2.25</div>
<div class="t" style="left:774px;top:501px;width:38px;height:27px;line-height:27px;"><span class="b"><i class="c">平</i></span></div>
<div class="t" style="left:813px;top:501px;width:38px;height:27px;line-height:27px;"><span class="r"><i class="c">赢</i></span></div>
<div class="t" style="left:852px;top:501px;width:56px;height:27px;line-height:27px;"><span class="g"><i class="c">小</i></span></div>
<div class="t" style="left:0px;top:529px;width:54px;height:27px;line-height:27px;color:#fff"><i class="c">日职联</i></div>
<div class="t" style="left:55px;top:529px;width:74px;height:27px;line-height:27px;">25-07-05</div>
<div class="t" style="left:130px;top:529px;width:89px;height:27px;line-height:27px;"><i class="c">神户胜利船</i></div>
<div class="t" style="left:220px;top:529px;width:86px;height:27px;line-height:27px;"><span class="r">4-0</span>(1-0)</div>
<div class="t" style="left:307px;top:529px;width:38px;height:27px;line-height:27px;">6-3</div>
<div class="t" style="left:346px;top:529px;width:89px;height:27px;line-height:27px;"><span class="g"><i class="c">湘南海洋</i></span></div>
<div class="t" style="left:436px;top:529px;width:40px;height:27px;line-height:27px;">0.92</div>
<div class="t" style="left:477px;top:529px;width:66px;height:27px;line-height:27px;"><i class="c">一球</i></div>
<div class="t" style="left:544px;top:529px;width:42px;height:27px;line-height:27px;">0.97</div>
<div class="t" style="left:587px;top:529px;width:60px;height:27px;line-height:27px;">1.51</div>
<div class="t" style="left:648px;top:529px;width:62px;height:27px;line-height:27px;">4.01</div>
<div class="t" style="left:711px;top:529px;width:62px;height:27px;line-height:27px;">5.99</div>
<div class="t" style="left:774px;top:529px;width:38px;height:27px;line-height:27px;"><span class="g"><i class="c">负</i></span></div>
<div class="t" style="left:813px;top:529px;width:38px;height:27px;line-height:27px;"><span class="g"><i class="c">输</i></span></div>
<div class="t" style="left:852px;top:529px;width:56px;height:27px;line-height:27px;"><span class="r"><i class="c">大</i></span></div>
<div class="t" style="left:0px;top:557px;width:54px;height:27px;line-height:27px;color:#fff"><i class="c">日职联</i></div>
<div class="t" style="left:55px;top:557px;width:74px;height:27px;line-height:27px;">25-06-28</div>
<div class="t" style="left:130px;top:557px;width:89px;height:27px;line-height:27px;"><span class="g"><i class="c">湘南海洋</i></span></div>
<div class="t" style="left:220px;top:557px;width:86px;height:27px;line-height:27px;"><span class="r">1-1</span>(1-0)</div>
<div class="t" style="left:307px;top:557px;width:38px;height:27px;line-height:27px;">5-4</div>
<div class="t" style="left:346px;top:557px;width:89px;height:27px;line-height:27px;"><i class="c">横滨水手</i></div>
<div class="t" style="left:436px;top:557px;width:40px;height:27px;line-height:27px;">0.96</div>
<div class="t" style="left:477px;top:557px;width:66px;height:27px;line-height:27px;"><i class="c">平</i>/<i class="c">半</i></div>
<div class="t" style="left:544px;top:557px;width:42px;height:27px;line-height:27px;">0.93</div>
<div class="t" style="left:587px;top:557px;width:60px;height:27px;line-height:27px;">2.11</div>
<div class="t" style="left:648px;top:557px;width:62px;height:27px;line-height:27px;">3.50</div>
<div class="t" style="left:711px;top:557px;width:62px;height:27px;line-height:27px;">3.14</div>
<div class="t" style="left:774px;top:557px;width:38px;height:27px;line-height:27px;"><span class="b"><i class="c">平</i></span></div>
<div class="t" style="left:813px;top:557px;width:38px;height:27px;line-height:27px;"><span class="g"><i class="c">输</i></span></div>
<div class="t" style="left:852px;top:557px;width:56px;height:27px;line-height:27px;"><span class="g"><i class="c">小</i></span></div>
<div class="t" style="left:0px;top:585px;width:54px;height:27px;line-height:27px;color:#fff"><i class="c">日职联</i></div>
<div class="t" style="left:55px;top:585px;width:74px;height:27px;line-height:27px;">25-06-14</div>
<div class="t" style="left:130px;top:585px;width:89px;height:27px;line-height:27px;"><span class="g"><i class="c">湘南海洋</i></span></div>
<div class="t" style="left:220px;top:585px;width:86px;height:27px;line-height:27px;"><span class="r">1-2</span>(0-1)</div>
<div class="t" style="left:307px;top:585px;width:38px;height:27px;line-height:27px;">3-10</div>
<div class="t" style="left:346px;top:585px;width:89px;height:27px;line-height:27px;"><i class="c">町田泽维亚</i></div>
<div class="t" style="left:436px;top:585px;width:40px;height:27px;line-height:27px;">0.91</div>
<div class="t" style="left:477px;top:585px;width:66px;height:27px;line-height:27px;"><span class="r">*</span><i class="c">半球</i></div>
<div class="t" style="left:544px;top:585px;width:42px;height:27px;line-height:27px;">0.98</div>
<div class="t" style="left:587px;top:585px;width:60px;height:27px;line-height:27px;">3.97</div>
<div class="t" style="left:648px;top:585px;width:62px;height:27px;line-height:27px;">3.17</div>
<div class="t" style="left:711px;top:585px;width:62px;height:27px;line-height:27px;">1.96</div>
<div class="t" style="left:774px;top:585px;width:38px;height:27px;line-height:27px;"><span class="g"><i class="c">负</i></span></div>
<div class="t" style="left:813px;top:585px;width:38px;height:27px;line-height:27px;"><span class="g"><i class="c">输</i></span></div>
<div class="t" style="left:852px;top:585px;width:56px;height:27px;line-height:27px;"><span class="r"><i class="c">大</i></span></div>
<div class="t" style="left:0px;top:613px;width:54px;height:27px;line-height:27px;color:#fff"><i class="c">日皇杯</i></div>
<div class="t" style="left:55px;top:613px;width:74px;height:27px;line-height:27px;">25-06-11</div>
<div class="t" style="left:130px;top:613px;width:89px;height:27px;line-height:27px;"><span class="g"><i class="c">湘南海洋</i></span></div>
<div class="t" style="left:220px;top:613px;width:86px;height:27px;line-height:27px;"><span class="r">2-0</span>(0-0)</div>
<div class="t" style="left:307px;top:613px;width:38px;height:27px;line-height:27px;">4-2</div>
<div class="t" style="left:346px;top:613px;width:89px;height:27px;line-height:27px;">FC<i class="c">岐阜</i></div>
<div class="t" style="left:436px;top:613px;width:40px;height:27px;line-height:27px;">0.85</div>
<div class="t" style="left:477px;top:613px;width:66px;height:27px;line-height:27px;"><i class="c">一</i>/<i class="c">球半</i></div>
<div class="t" style="left:544px;top:613px;width:42px;height:27px;line-height:27px;">0.97</div>
<div class="t" style="left:587px;top:613px;width:60px;height:27px;line-height:27px;">1.34</div>
<div class="t" style="left:648px;top:613px;width:62px;height:27px;line-height:27px;">4.76</div>
<div class="t" style="left:711px;top:613px;width:62px;height:27px;line-height:27px;">7.56</div>
<div class="t" style="left:774px;top:613px;width:38px;height:27px;line-height:27px;"><span class="r"><i class="c">胜</i></span></div>
<div class="t" style="left:813px;top:613px;width:38px;height:27px;line-height:27px;"><span class="r"><i class="c">赢</i></span></div>
<div class="t" style="left:852px;top:613px;width:56px;height:27px;line-height:27px;"><span class="g"><i class="c">小</i></span></div>
<div class="t" style="left:0px;top:641px;width:54px;height:27px;line-height:27px;color:#fff"><i class="c">日联杯</i></div>
<div class="t" style="left:55px;top:641px;width:74px;height:27px;line-height:27px;">25-06-08</div>
<div class="t" style="left:130px;top:641px;width:89px;height:27px;line-height:27px;"><i class="c">磐田喜悦</i></div>
<div class="t" style="left:220px;top:641px;width:86px;height:27px;line-height:27px;"><span class="r">1-0</span>(0-0)</div>
<div class="t" style="left:307px;top:641px;width:38px;height:27px;line-height:27px;">10-4</div>
<div class="t" style="left:346px;top:641px;width:89px;height:27px;line-height:27px;"><span class="g"><i class="c">湘南海洋</i></span></div>
<div class="t" style="left:436px;top:641px;width:40px;height:27px;line-height:27px;">0.85</div>
<div class="t" style="left:477px;top:641px;width:66px;height:27px;line-height:27px;"><i class="c">平手</i></div>
<div class="t" style="left:544px;top:641px;width:42px;height:27px;line-height:27px;">1.04</div>
<div class="t" style="left:587px;top:641px;width:60px;height:27px;line-height:27px;">2.52</div>
<div class="t" style="left:648px;top:641px;width:62px;height:27px;line-height:27px;">3.38</div>
<div class="t" style="left:711px;top:641px;width:62px;height:27px;line-height:27px;">2.53</div>
<div class="t" style="left:774px;top:641px;width:38px;height:27px;line-height:27px;"><span class="g"><i class="c">负</i></span></div>
<div class="t" style="left:813px;top:641px;width:38px;height:27px;line-height:27px;"><span class="g"><i class="c">输</i></span></div>
<div class="t" style="left:852px;top:641px;width:56px;height:27px;line-height:27px;"><span class="g"><i class="c">小</i></span></div>
<div class="t" style="left:0px;top:669px;width:54px;height:27px;line-height:27px;color:#fff"><i class="c">日联杯</i></div>
<div class="t" style="left:55px;top:669px;width:74px;height:27px;line-height:27px;">25-06-04</div>
<div class="t" style="left:130px;top:669px;width:89px;height:27px;line-height:27px;"><span class="g"><i class="c">湘南海洋</i></span></div>
<div class="t" style="left:220px;top:669px;width:86px;height:27px;line-height:27px;"><span class="r">2-0</span>(2-0)</div>
<div class="t" style="left:307px;top:669px;width:38px;height:27px;line-height:27px;">10-2</div>
<div class="t" style="left:346px;top:669px;width:89px;height:27px;line-height:27px;"><i class="c">磐田喜悦</i><span class="rc">1</span></div>
<div class="t" style="left:436px;top:669px;width:40px;height:27px;line-height:27px;">0.97</div>
<div class="t" style="left:477px;top:669px;width:66px;height:27px;line-height:27px;"><i class="c">半</i>/<i class="c">一</i></div>
<div class="t" style="left:544px;top:669px;width:42px;height:27px;line-height:27px;">0.91</div>
<div class="t" style="left:587px;top:669px;width:60px;height:27px;line-height:27px;">1.78</div>
<div class="t" style="left:648px;top:669px;width:62px;height:27px;line-height:27px;">3.38</div>
<div class="t" style="left:711px;top:669px;width:62px;height:27px;line-height:27px;">4.45</div>
<div class="t" style="left:774px;top:669px;width:38px;height:27px;line-height:27px;"><span class="r"><i class="c">胜</i></span></div>
<div class="t" style="left:813px;top:669px;width:38px;height:27px;line-height:27px;"><span class="r"><i class="c">赢</i></span></div>
<div class="t" style="left:852px;top:669px;width:56px;height:27px;line-height:27px;"><span class="g"><i class="c">小</i></span></div>
<div class="t" style="left:0px;top:697px;width:54px;height:27px;line-height:27px;color:#fff"><i class="c">日职联</i></div>
<div class="t" style="left:55px;top:697px;width:74px;height:27px;line-height:27px;">25-06-01</div>
<div class="t" style="left:130px;top:697px;width:89px;height:27px;line-height:27px;"><span class="g"><i class="c">湘南海洋</i></span></div>
<div class="t" style="left:220px;top:697px;width:86px;height:27px;line-height:27px;"><span class="r">1-1</span>(0-1)</div>
<div class="t" style="left:307px;top:697px;width:38px;height:27px;line-height:27px;">2-4</div>
<div class="t" style="left:346px;top:697px;width:89px;height:27px;line-height:27px;"><i class="c">冈山绿雉</i></div>
<div class="t" style="left:436px;top:697px;width:40px;height:27px;line-height:27px;">0.79</div>
<div class="t" style="left:477px;top:697px;width:66px;height:27px;line-height:27px;"><i class="c">平手</i></div>
<div class="t" style="left:544px;top:697px;width:42px;height:27px;line-height:27px;">1.11</div>
<div class="t" style="left:587px;top:697px;width:60px;height:27px;line-height:27px;">2.46</div>
<div class="t" style="left:648px;top:697px;width:62px;height:27px;line-height:27px;">3.05</div>
<div class="t" style="left:711px;top:697px;width:62px;height:27px;line-height:27px;">2.91</div>
<div class="t" style="left:774px;top:697px;width:38px;height:27px;line-height:27px;"><span class="b"><i class="c">平</i></span></div>
<div class="t" style="left:813px;top:697px;width:38px;height:27px;line-height:27px;"><span class="b"><i class="c">走</i></span></div>
<div class="t" style="left:852px;top:697px;width:56px;height:27px;line-height:27px;"><span class="g"><i class="c">小</i></span></div>
<div class="t" style="left:0px;top:725px;width:54px;height:27px;line-height:27px;color:#fff"><i class="c">日职联</i></div>
<div class="t" style="left:55px;top:725px;width:74px;height:27px;line-height:27px;">25-05-25</div>
<div class="t" style="left:130px;top:725px;width:89px;height:27px;line-height:27px;"><i class="c">新泻天鹅</i></div>
<div class="t" style="left:220px;top:725px;width:86px;height:27px;line-height:27px;"><span class="r">2-1</span>(1-1)</div>
<div class="t" style="left:307px;top:725px;width:38px;height:27px;line-height:27px;">3-5</div>
<div class="t" style="left:346px;top:725px;width:89px;height:27px;line-height:27px;"><span class="g"><i class="c">湘南海洋</i></span></div>
<div class="t" style="left:436px;top:725px;width:40px;height:27px;line-height:27px;">0.96</div>
<div class="t" style="left:477px;top:725px;width:66px;height:27px;line-height:27px;"><i class="c">平</i>/<i class="c">半</i></div>
<div class="t" style="left:544px;top:725px;width:42px;height:27px;line-height:27px;">0.93</div>
<div class="t" style="left:587px;top:725px;width:60px;height:27px;line-height:27px;">2.30</div>
<div class="t" style="left:648px;top:725px;width:62px;height:27px;line-height:27px;">3.17</div>
<div class="t" style="left:711px;top:725px;width:62px;height:27px;line-height:27px;">3.09</div>
<div class="t" style="left:774px;top:725px;width:38px;height:27px;line-height:27px;"><span class="g"><i class="c">负</i></span></div>
<div class="t" style="left:813px;top:725px;width:38px;height:27px;line-height:27px;"><span class="g"><i class="c">输</i></span></div>
<div class="t" style="left:852px;top:725px;width:56px;height:27px;line-height:27px;"><span class="r"><i class="c">大</i></span></div>
<div class="t" style="left:354px;top:35px;width:14px;height:24px;line-height:24px;text-align:left"><i class="c">近</i></div>
<div class="sel" style="left:371px;top:37px;width:35px;height:16px;line-height:14px;padding-left:3px;padding-top:1px;font-size:11px"><span class="sl">10</span><svg style="position:absolute;right:5px;top:4px" width="7" height="6" viewBox="0 0 7 6"><path d="M0 0.2 L7 0.2 L3.5 6 Z" fill="#000"/></svg></div>
<div class="t" style="left:410px;top:35px;width:14px;height:24px;line-height:24px;text-align:left"><i class="c">场</i></div>
<div class="cb" style="left:426px;top:40px;"></div>
<div class="t" style="left:443px;top:35px;width:30px;height:24px;line-height:24px;text-align:left"><i class="c">同主</i></div>
<div class="cb" style="left:467px;top:40px;"><svg width="12" height="12" viewBox="0 0 12 12"><path d="M2.6 5.6 L4.8 8.2 L9 2.6" stroke="#333" stroke-width="2.3" fill="none"/></svg></div>
<div class="t" style="left:480px;top:35px;width:40px;height:24px;line-height:24px;text-align:left"><i class="c">日职联</i></div>
<div class="cb" style="left:516px;top:40px;"><svg width="12" height="12" viewBox="0 0 12 12"><path d="M2.6 5.6 L4.8 8.2 L9 2.6" stroke="#333" stroke-width="2.3" fill="none"/></svg></div>
<div class="t" style="left:529px;top:35px;width:40px;height:24px;line-height:24px;text-align:left"><i class="c">世俱杯</i></div>
<div class="cb" style="left:565px;top:40px;"><svg width="12" height="12" viewBox="0 0 12 12"><path d="M2.6 5.6 L4.8 8.2 L9 2.6" stroke="#333" stroke-width="2.3" fill="none"/></svg></div>
<div class="t" style="left:578px;top:35px;width:50px;height:24px;line-height:24px;text-align:left"><i class="c">球会友谊</i></div>
<div class="sel" style="left:457px;top:57px;width:59px;height:20px;line-height:18px;padding-left:4px;padding-top:1px;"><span class="sl"><span style="letter-spacing:0.6px">Crow*</span></span><svg style="position:absolute;right:5px;top:6px" width="7" height="6" viewBox="0 0 7 6"><path d="M0 0.2 L7 0.2 L3.5 6 Z" fill="#000"/></svg></div>
<div class="sel" style="left:524px;top:57px;width:36px;height:20px;line-height:18px;padding-left:4px;padding-top:1px;"><span class="sl"><i class="c">终</i></span><svg style="position:absolute;right:5px;top:6px" width="7" height="6" viewBox="0 0 7 6"><path d="M0 0.2 L7 0.2 L3.5 6 Z" fill="#000"/></svg></div>
<div class="sel" style="left:615px;top:57px;width:84px;height:20px;line-height:18px;padding-left:4px;padding-top:1px;"><span class="sl"><i class="c">胜平负均值</i></span><svg style="position:absolute;right:5px;top:6px" width="7" height="6" viewBox="0 0 7 6"><path d="M0 0.2 L7 0.2 L3.5 6 Z" fill="#000"/></svg></div>
<div class="sel" style="left:707px;top:57px;width:36px;height:20px;line-height:18px;padding-left:4px;padding-top:1px;"><span class="sl"><i class="c">终</i></span><svg style="position:absolute;right:5px;top:6px" width="7" height="6" viewBox="0 0 7 6"><path d="M0 0.2 L7 0.2 L3.5 6 Z" fill="#000"/></svg></div>
<div class="sel" style="left:817px;top:57px;width:48px;height:20px;line-height:18px;padding-left:4px;padding-top:1px;"><span class="sl"><i class="c">全场</i></span><svg style="position:absolute;right:5px;top:6px" width="7" height="6" viewBox="0 0 7 6"><path d="M0 0.2 L7 0.2 L3.5 6 Z" fill="#000"/></svg></div>
<div class="t" style="left:358px;top:410px;width:14px;height:24px;line-height:24px;text-align:left"><i class="c">近</i></div>
<div class="sel" style="left:374px;top:412px;width:36px;height:16px;line-height:14px;padding-left:3px;padding-top:1px;font-size:11px"><span class="sl">10</span><svg style="position:absolute;right:5px;top:4px" width="7" height="6" viewBox="0 0 7 6"><path d="M0 0.2 L7 0.2 L3.5 6 Z" fill="#000"/></svg></div>
<div class="t" style="left:414px;top:410px;width:14px;height:24px;line-height:24px;text-align:left"><i class="c">场</i></div>
<div class="cb" style="left:430px;top:415px;"></div>
<div class="t" style="left:447px;top:410px;width:30px;height:24px;line-height:24px;text-align:left"><i class="c">同客</i></div>
<div class="cb" style="left:475px;top:415px;"><svg width="12" height="12" viewBox="0 0 12 12"><path d="M2.6 5.6 L4.8 8.2 L9 2.6" stroke="#333" stroke-width="2.3" fill="none"/></svg></div>
<div class="t" style="left:488px;top:410px;width:40px;height:24px;line-height:24px;text-align:left"><i class="c">日职联</i></div>
<div class="cb" style="left:524px;top:415px;"><svg width="12" height="12" viewBox="0 0 12 12"><path d="M2.6 5.6 L4.8 8.2 L9 2.6" stroke="#333" stroke-width="2.3" fill="none"/></svg></div>
<div class="t" style="left:537px;top:410px;width:40px;height:24px;line-height:24px;text-align:left"><i class="c">日皇杯</i></div>
<div class="cb" style="left:573px;top:415px;"><svg width="12" height="12" viewBox="0 0 12 12"><path d="M2.6 5.6 L4.8 8.2 L9 2.6" stroke="#333" stroke-width="2.3" fill="none"/></svg></div>
<div class="t" style="left:586px;top:410px;width:40px;height:24px;line-height:24px;text-align:left"><i class="c">日联杯</i></div>
<div class="sel" style="left:459px;top:432px;width:59px;height:20px;line-height:18px;padding-left:4px;padding-top:1px;"><span class="sl"><span style="letter-spacing:0.6px">Crow*</span></span><svg style="position:absolute;right:5px;top:6px" width="7" height="6" viewBox="0 0 7 6"><path d="M0 0.2 L7 0.2 L3.5 6 Z" fill="#000"/></svg></div>
<div class="sel" style="left:526px;top:432px;width:36px;height:20px;line-height:18px;padding-left:4px;padding-top:1px;"><span class="sl"><i class="c">终</i></span><svg style="position:absolute;right:5px;top:6px" width="7" height="6" viewBox="0 0 7 6"><path d="M0 0.2 L7 0.2 L3.5 6 Z" fill="#000"/></svg></div>
<div class="sel" style="left:616px;top:432px;width:84px;height:20px;line-height:18px;padding-left:4px;padding-top:1px;"><span class="sl"><i class="c">胜平负均值</i></span><svg style="position:absolute;right:5px;top:6px" width="7" height="6" viewBox="0 0 7 6"><path d="M0 0.2 L7 0.2 L3.5 6 Z" fill="#000"/></svg></div>
<div class="sel" style="left:708px;top:432px;width:36px;height:20px;line-height:18px;padding-left:4px;padding-top:1px;"><span class="sl"><i class="c">终</i></span><svg style="position:absolute;right:5px;top:6px" width="7" height="6" viewBox="0 0 7 6"><path d="M0 0.2 L7 0.2 L3.5 6 Z" fill="#000"/></svg></div>
<div class="sel" style="left:817px;top:432px;width:48px;height:20px;line-height:18px;padding-left:4px;padding-top:1px;"><span class="sl"><i class="c">全场</i></span><svg style="position:absolute;right:5px;top:6px" width="7" height="6" viewBox="0 0 7 6"><path d="M0 0.2 L7 0.2 L3.5 6 Z" fill="#000"/></svg></div>
<div style="left:0px;top:30px;width:909px;height:1px;background:#e4e8ef"></div>
<div style="left:909px;top:0px;width:1px;height:752px;background:#f2f2f2"></div>
</body></html>
